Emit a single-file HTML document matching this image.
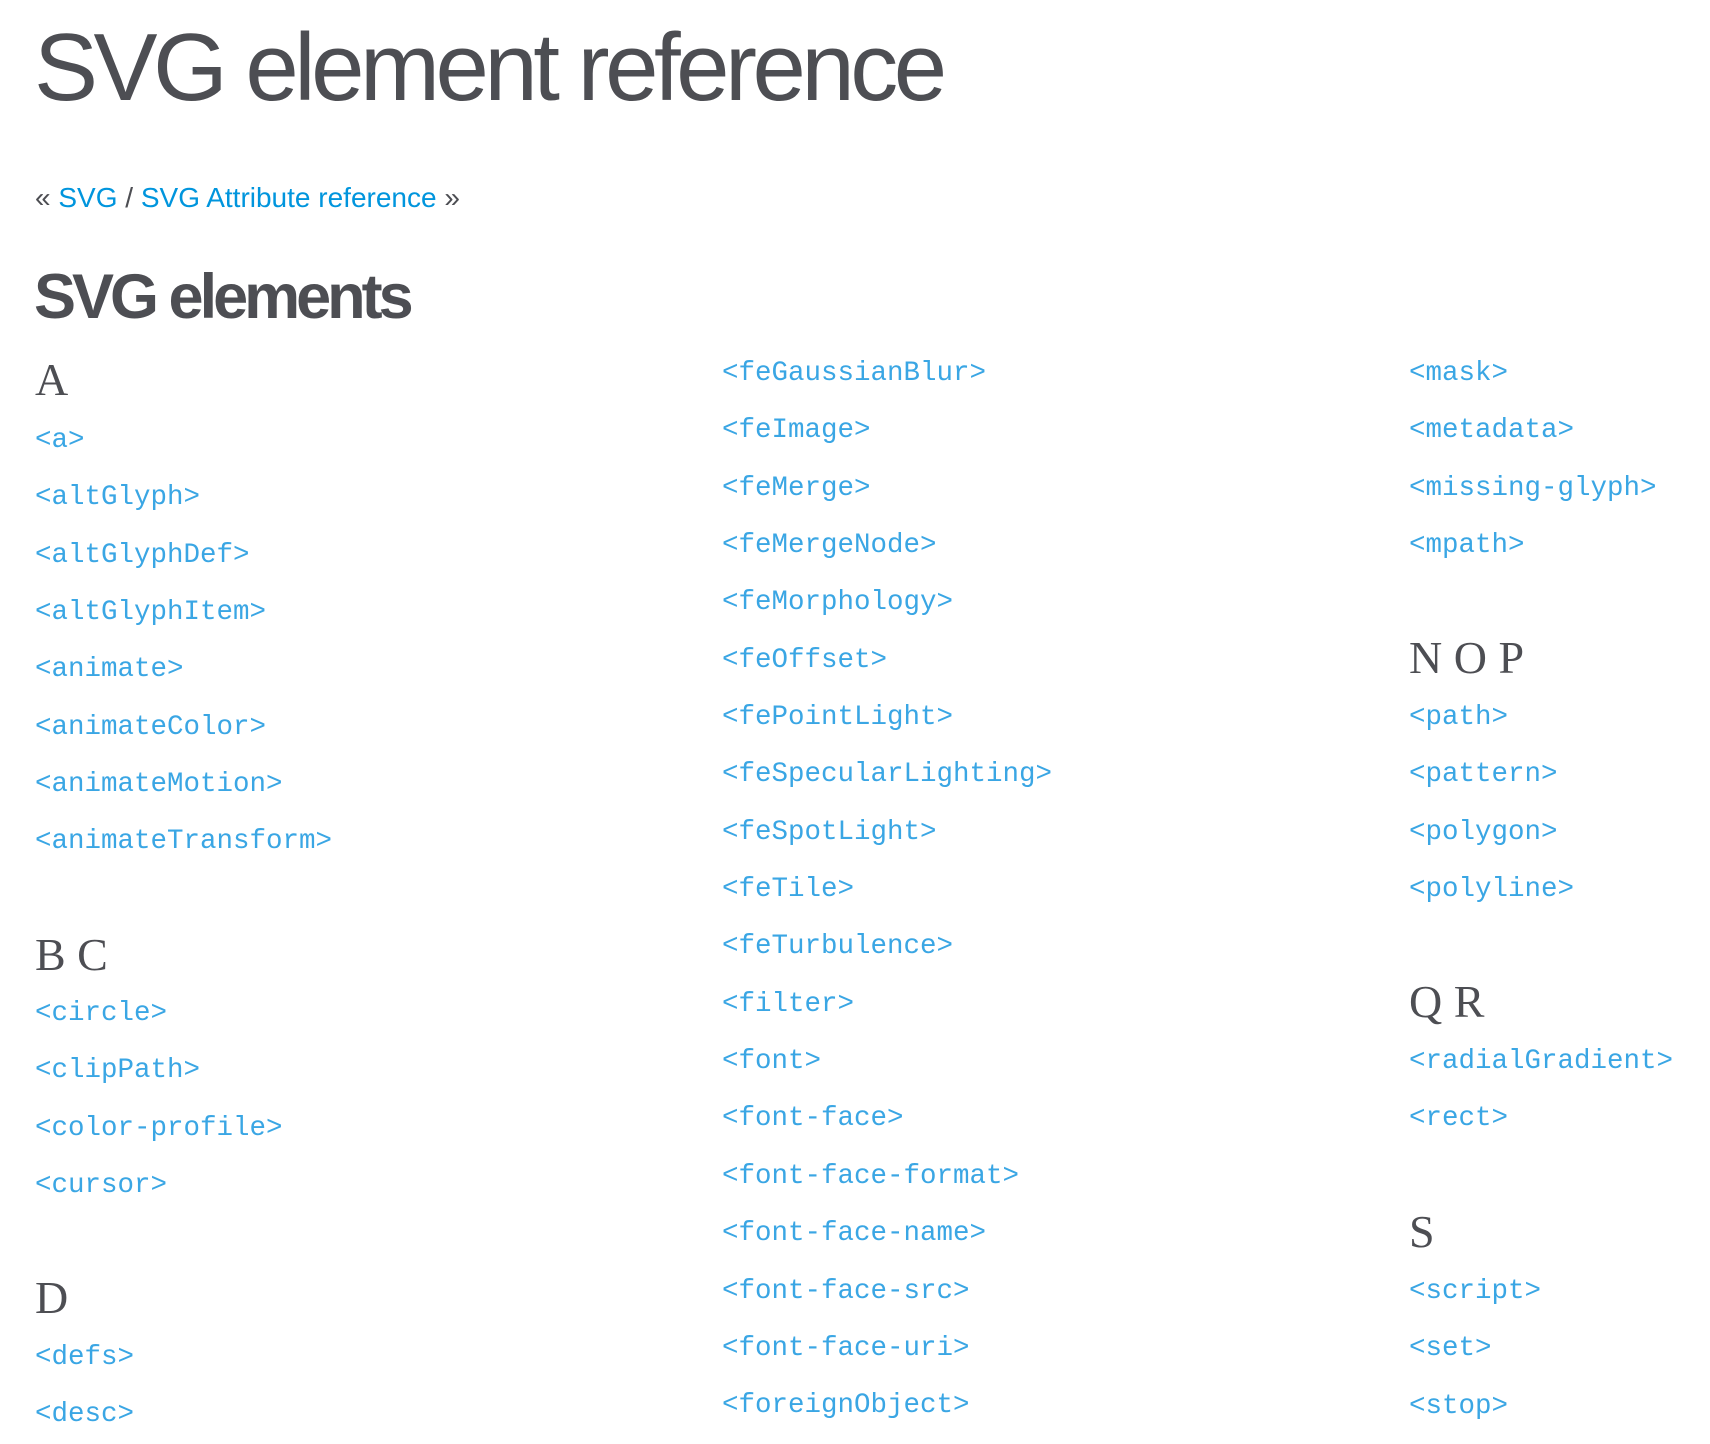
<!DOCTYPE html>
<html><head><meta charset="utf-8"><style>
body{margin:0;width:1710px;height:1434px;background:#fff;overflow:hidden;color:#4d4e53;font-family:"Liberation Sans",sans-serif;position:relative}
.t{position:absolute;left:34px;top:20px;font-size:96px;line-height:96px;font-weight:normal;letter-spacing:-4.5px;white-space:nowrap}
.bc{position:absolute;left:35px;top:184px;font-size:28px;line-height:28px;white-space:nowrap}
.bc a{color:#0095dd;text-decoration:none}
.h2{position:absolute;left:34px;top:266px;font-size:63px;line-height:63px;font-weight:bold;letter-spacing:-4px;white-space:nowrap}
.hd{position:absolute;font-family:"Liberation Serif",serif;font-size:46px;line-height:50px;white-space:nowrap;color:#4d4e53}
.ls{position:absolute;font-family:"Liberation Mono",monospace;font-size:27.5px;line-height:57.35px;color:#3aa6e4;white-space:pre}
</style></head><body>
<div class="t">SVG element reference</div>
<div class="bc">« <a>SVG</a> / <a>SVG Attribute reference</a> »</div>
<div class="h2">SVG elements</div>

<div class="hd" style="left:35px;top:355px">A</div>
<div class="ls" style="left:35px;top:412px">&lt;a&gt;
&lt;altGlyph&gt;
&lt;altGlyphDef&gt;
&lt;altGlyphItem&gt;
&lt;animate&gt;
&lt;animateColor&gt;
&lt;animateMotion&gt;
&lt;animateTransform&gt;</div>
<div class="hd" style="left:35px;top:930px">B C</div>
<div class="ls" style="left:35px;top:985px">&lt;circle&gt;
&lt;clipPath&gt;
&lt;color-profile&gt;
&lt;cursor&gt;</div>
<div class="hd" style="left:35px;top:1273px">D</div>
<div class="ls" style="left:35px;top:1329px">&lt;defs&gt;
&lt;desc&gt;</div>

<div class="ls" style="left:722px;top:345px">&lt;feGaussianBlur&gt;
&lt;feImage&gt;
&lt;feMerge&gt;
&lt;feMergeNode&gt;
&lt;feMorphology&gt;
&lt;feOffset&gt;
&lt;fePointLight&gt;
&lt;feSpecularLighting&gt;
&lt;feSpotLight&gt;
&lt;feTile&gt;
&lt;feTurbulence&gt;
&lt;filter&gt;
&lt;font&gt;
&lt;font-face&gt;
&lt;font-face-format&gt;
&lt;font-face-name&gt;
&lt;font-face-src&gt;
&lt;font-face-uri&gt;
&lt;foreignObject&gt;</div>

<div class="ls" style="left:1409px;top:345px">&lt;mask&gt;
&lt;metadata&gt;
&lt;missing-glyph&gt;
&lt;mpath&gt;</div>
<div class="hd" style="left:1409px;top:633px">N O P</div>
<div class="ls" style="left:1409px;top:689px">&lt;path&gt;
&lt;pattern&gt;
&lt;polygon&gt;
&lt;polyline&gt;</div>
<div class="hd" style="left:1409px;top:977px">Q R</div>
<div class="ls" style="left:1409px;top:1033px">&lt;radialGradient&gt;
&lt;rect&gt;</div>
<div class="hd" style="left:1409px;top:1207px">S</div>
<div class="ls" style="left:1409px;top:1263px">&lt;script&gt;
&lt;set&gt;
&lt;stop&gt;</div>
</body></html>
